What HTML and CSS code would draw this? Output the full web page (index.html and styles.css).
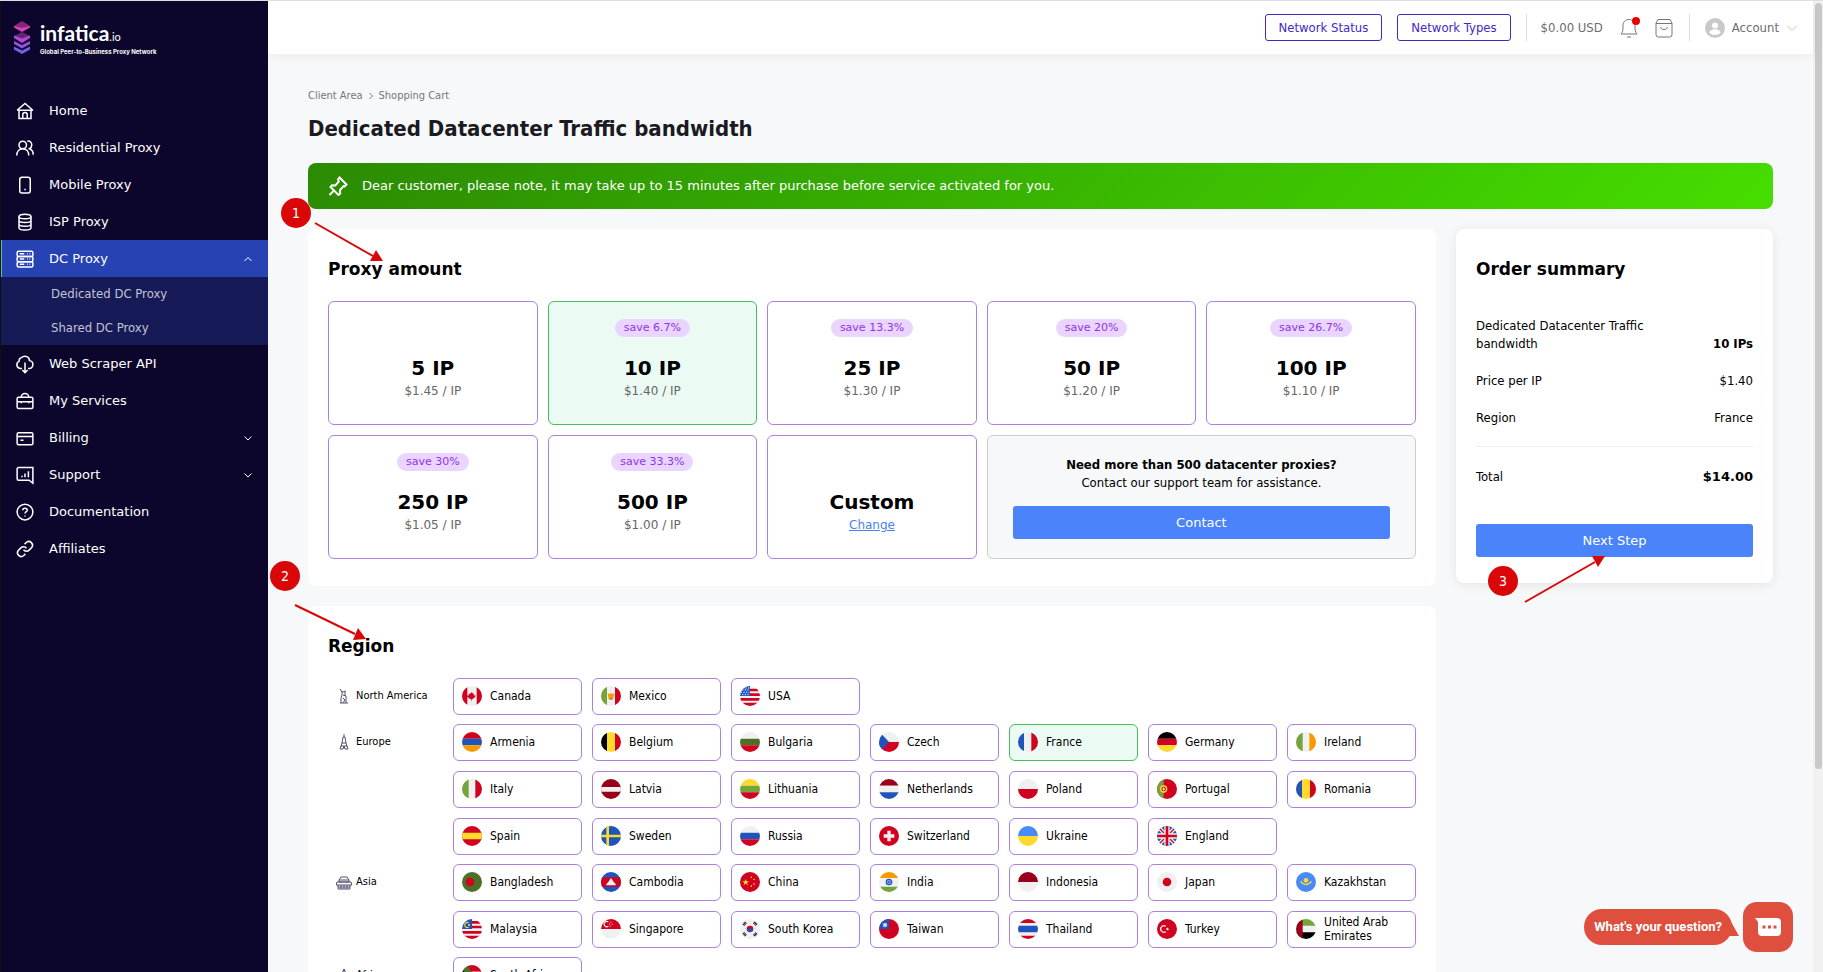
FILE: index.html
```html
<!DOCTYPE html>
<html lang="en">
<head>
    <meta charset="UTF-8">
    <meta name="viewport" content="width=device-width, initial-scale=1.0">
    <title>Shopping Cart - Infatica</title>
    <link rel="stylesheet" href="styles.css">
</head>
<body>
    <!-- Flag sprite -->
    <svg class="sprite" aria-hidden="true">
        <symbol id="canada" viewBox="0 0 30 30"><path fill="#f0f0f0" d="M0 0h30v30H0z"/><path fill="#d0021f" d="M0 0h8v30H0zM22 0h8v30h-8zM15 9l1.5 3 1.5-.6-.3 2.8 2.8-.2-1 1.6.8.8-3.6 2.1.2 1.2-2.4-.3V22h-1v-2.6l-2.400.3.2-1.200-3.600-2.100.8-.8-1-1.600 2.800.2-.3-2.800 1.500.6z"/></symbol>
        <symbol id="mexico" viewBox="0 0 30 30"><path fill="#f0f0f0" d="M0 0h30v30H0z"/><path fill="#73a53c" d="M0 0h9v30H0z"/><path fill="#d0021f" d="M21 0h9v30h-9z"/><path fill="#ff9811" d="M10 11l3 1 2-2 2 2 3-1-1 6a4 4 0 0 1-8 0z"/><path fill="#73a53c" d="M12 18h6l-3 3z"/></symbol>
        <symbol id="usa" viewBox="0 0 30 30"><path fill="#f0f0f0" d="M0 0h30v30H0z"/><path fill="#d0021f" d="M14 4h16v4H14zM14 11h16v4H14zM0 18h30v4H0zM0 25h30v5H0z"/><path fill="#1e54bb" d="M0 0h15v15H0z"/><path stroke="#f0f0f0" stroke-width="1.500" stroke-dasharray="2 2" d="M3 6h12M1 9.500h13M3 13h12M8 3h7"/></symbol>
        <symbol id="armenia" viewBox="0 0 30 30"><path fill="#d0021f" d="M0 0h30v10H0z"/><path fill="#1e54bb" d="M0 10h30v10H0z"/><path fill="#f79a00" d="M0 20h30v10H0z"/></symbol>
        <symbol id="belgium" viewBox="0 0 30 30"><path d="M0 0h9v30H0z"/><path fill="#ffda2c" d="M9 0h12v30H9z"/><path fill="#d0021f" d="M21 0h9v30h-9z"/></symbol>
        <symbol id="bulgaria" viewBox="0 0 30 30"><path fill="#f0f0f0" d="M0 0h30v10H0z"/><path fill="#4d7029" d="M0 10h30v10H0z"/><path fill="#d0021f" d="M0 20h30v10H0z"/></symbol>
        <symbol id="czech" viewBox="0 0 30 30"><path fill="#f0f0f0" d="M0 0h30v15H0z"/><path fill="#d0021f" d="M0 15h30v15H0z"/><path fill="#1e54bb" d="M0 0h1l14 15L1 30H0z"/></symbol>
        <symbol id="france" viewBox="0 0 30 30"><path fill="#f0f0f0" d="M0 0h30v30H0z"/><path fill="#1e54bb" d="M0 0h9v30H0z"/><path fill="#d0021f" d="M20 0h10v30H20z"/></symbol>
        <symbol id="germany" viewBox="0 0 30 30"><path d="M0 0h30v10H0z"/><path fill="#d0021f" d="M0 10h30v10H0z"/><path fill="#ffda2c" d="M0 20h30v10H0z"/></symbol>
        <symbol id="ireland" viewBox="0 0 30 30"><path fill="#f0f0f0" d="M0 0h30v30H0z"/><path fill="#73a53c" d="M0 0h10v30H0z"/><path fill="#f79a00" d="M20 0h10v30H20z"/></symbol>
        <symbol id="italy" viewBox="0 0 30 30"><path fill="#f0f0f0" d="M0 0h30v30H0z"/><path fill="#73a53c" d="M0 0h10v30H0z"/><path fill="#d0021f" d="M20 0h10v30H20z"/></symbol>
        <symbol id="latvia" viewBox="0 0 30 30"><path fill="#970018" d="M0 0h30v30H0z"/><path fill="#f0f0f0" d="M0 12h30v7H0z"/></symbol>
        <symbol id="lithuania" viewBox="0 0 30 30"><path fill="#ffda2c" d="M0 0h30v10H0z"/><path fill="#73a53c" d="M0 10h30v10H0z"/><path fill="#d0021f" d="M0 20h30v10H0z"/></symbol>
        <symbol id="netherlands" viewBox="0 0 30 30"><path fill="#970018" d="M0 0h30v10H0z"/><path fill="#f0f0f0" d="M0 10h30v10H0z"/><path fill="#1e54bb" d="M0 20h30v10H0z"/></symbol>
        <symbol id="poland" viewBox="0 0 30 30"><path fill="#f0f0f0" d="M0 0h30v15H0z"/><path fill="#d0021f" d="M0 15h30v15H0z"/></symbol>
        <symbol id="portugal" viewBox="0 0 30 30"><path fill="#d0021f" d="M0 0h30v30H0z"/><path fill="#73a53c" d="M0 0h10v30H0z"/><circle cx="10" cy="15" r="4.500" fill="#d0021f" stroke="#ffda2c" stroke-width="2"/><path fill="#f0f0f0" d="M8.500 13h3v3l-1.500 1.500L8.500 16z"/></symbol>
        <symbol id="romania" viewBox="0 0 30 30"><path fill="#ffda2c" d="M0 0h30v30H0z"/><path fill="#1e54bb" d="M0 0h9v30H0z"/><path fill="#d0021f" d="M21 0h9v30h-9z"/></symbol>
        <symbol id="spain" viewBox="0 0 30 30"><path fill="#d0021f" d="M0 0h30v30H0z"/><path fill="#ffda2c" d="M0 10h30v10H0z"/></symbol>
        <symbol id="sweden" viewBox="0 0 30 30"><path fill="#1e54bb" d="M0 0h30v30H0z"/><path fill="#ffda2c" d="M8 0h4v30H8zM0 13h30v4H0z"/></symbol>
        <symbol id="russia" viewBox="0 0 30 30"><path fill="#f0f0f0" d="M0 0h30v10H0z"/><path fill="#1e54bb" d="M0 10h30v10H0z"/><path fill="#d0021f" d="M0 20h30v10H0z"/></symbol>
        <symbol id="switzerland" viewBox="0 0 30 30"><path fill="#d0021f" d="M0 0h30v30H0z"/><path fill="#f0f0f0" d="M12.500 7h5v5.500H23v5h-5.500V23h-5v-5.500H7v-5h5.500z"/></symbol>
        <symbol id="ukraine" viewBox="0 0 30 30"><path fill="#478af8" d="M0 0h30v15H0z"/><path fill="#ffda2c" d="M0 15h30v15H0z"/></symbol>
        <symbol id="england" viewBox="0 0 30 30"><path fill="#1e54bb" d="M0 0h30v30H0z"/><path stroke="#f0f0f0" stroke-width="6" d="M0 0l30 30M30 0L0 30"/><path stroke="#d0021f" stroke-width="2" d="M0 0l30 30M30 0L0 30"/><path stroke="#f0f0f0" stroke-width="8" d="M15 0v30M0 15h30"/><path stroke="#d0021f" stroke-width="4" d="M15 0v30M0 15h30"/></symbol>
        <symbol id="bangladesh" viewBox="0 0 30 30"><path fill="#4d7029" d="M0 0h30v30H0z"/><circle cx="12" cy="15" r="6.500" fill="#d0021f"/></symbol>
        <symbol id="cambodia" viewBox="0 0 30 30"><path fill="#1e54bb" d="M0 0h30v30H0z"/><path fill="#d0021f" d="M0 8h30v14H0z"/><path fill="#f0f0f0" d="M8 20v-2l3-3 2-3 2-3 2 3 2 3 3 3v2z"/></symbol>
        <symbol id="china" viewBox="0 0 30 30"><path fill="#d0021f" d="M0 0h30v30H0z"/><path fill="#ffda2c" d="M8.500 10l1.300 3.700h3.900l-3.200 2.300 1.300 3.700-3.300-2.300-3.200 2.300 1.200-3.700-3.200-2.300h4zM16 7h2v2h-2zM20 10h2v2h-2zM20 17h2v2h-2zM16 20h2v2h-2z"/></symbol>
        <symbol id="india" viewBox="0 0 30 30"><path fill="#f0f0f0" d="M0 0h30v30H0z"/><path fill="#f79a00" d="M0 0h30v9H0z"/><path fill="#73a53c" d="M0 22h30v8H0z"/><circle cx="15" cy="15" r="4" fill="#9bb6e4" stroke="#1e54bb" stroke-width="2"/><circle cx="15" cy="15" r="1.500" fill="#1e54bb"/></symbol>
        <symbol id="indonesia" viewBox="0 0 30 30"><path fill="#970018" d="M0 0h30v15H0z"/><path fill="#f0f0f0" d="M0 15h30v15H0z"/></symbol>
        <symbol id="japan" viewBox="0 0 30 30"><path fill="#f0f0f0" d="M0 0h30v30H0z"/><circle cx="15" cy="15" r="6.500" fill="#d0021f"/></symbol>
        <symbol id="kazakhstan" viewBox="0 0 30 30"><path fill="#478af8" d="M0 0h30v30H0z"/><circle cx="15" cy="12.500" r="3.500" fill="#ffda2c"/><path fill="none" stroke="#ffda2c" stroke-width="2" d="M7 14c2 4 4 3 8 5 4-2 6-1 8-5"/></symbol>
        <symbol id="malaysia" viewBox="0 0 30 30"><path fill="#f0f0f0" d="M0 0h30v30H0z"/><path fill="#d0021f" d="M14 3h16v4H14zM14 10h16v4H14zM0 18h30v4H0zM0 25h30v5H0z"/><path fill="#1e54bb" d="M0 0h15v15H0z"/><path fill="none" stroke="#ffda2c" stroke-width="1.700" d="M10 5.500a4 4 0 1 0 0 7"/><circle cx="10.500" cy="9" r="1.600" fill="#ffda2c"/></symbol>
        <symbol id="singapore" viewBox="0 0 30 30"><path fill="#d0021f" d="M0 0h30v15H0z"/><path fill="#f0f0f0" d="M0 15h30v15H0z"/><path fill="none" stroke="#f0f0f0" stroke-width="1.700" d="M11 4.500a4 4 0 1 0 0 6.500"/><path fill="#f0f0f0" d="M14 4h1.500v1.500H14zM12 7h1.500v1.500H12zM16 7h1.500v1.500H16zM13 10h1.500v1.500H13z"/></symbol>
        <symbol id="korea" viewBox="0 0 30 30"><path fill="#f0f0f0" d="M0 0h30v30H0z"/><path fill="#d0021f" d="M10 15a5 5 0 0 1 10 0z"/><path fill="#1e54bb" d="M10 15a5 5 0 0 0 10 0z"/><path stroke="#000" stroke-width="4" stroke-dasharray="1.300 .7" d="M5 9l4-4M21 5l4 4M5 21l4 4M21 25l4-4"/></symbol>
        <symbol id="taiwan" viewBox="0 0 30 30"><path fill="#d0021f" d="M0 0h30v30H0z"/><path fill="#1e54bb" d="M0 0h15v15H0z"/><circle cx="9" cy="9" r="2.500" fill="#f0f0f0" stroke="#a9bfe6" stroke-width="2"/></symbol>
        <symbol id="thailand" viewBox="0 0 30 30"><path fill="#f0f0f0" d="M0 0h30v30H0z"/><path fill="#d0021f" d="M0 0h30v6H0zM0 25h30v5H0z"/><path fill="#1e54bb" d="M0 10h30v10H0z"/></symbol>
        <symbol id="turkey" viewBox="0 0 30 30"><path fill="#d0021f" d="M0 0h30v30H0z"/><path fill="none" stroke="#f0f0f0" stroke-width="2" d="M13 11a4.800 4.800 0 1 0 0 8"/><path fill="#f0f0f0" d="M13.500 13.500l2 .5 1-1.500.5 2 1.500.7-1.700.8-.3 1.700-1.200-1.500-2 .3 1.200-1.500z"/></symbol>
        <symbol id="uae" viewBox="0 0 30 30"><path fill="#f0f0f0" d="M0 0h30v30H0z"/><path fill="#73a53c" d="M0 0h30v10H0z"/><path d="M0 20h30v10H0z"/><path fill="#970018" d="M0 0h10v30H0z"/></symbol>
        <symbol id="south-africa" viewBox="0 0 30 30"><path fill="#d0021f" d="M0 0h30v10H0z"/><path fill="#f0f0f0" d="M0 10h30v10H0z"/><path fill="#1e54bb" d="M0 20h30v10H0z"/><path fill="#4d7029" d="M0 0h7l10 13h13v4H17L7 30H0z"/><path d="M0 6l7 9-7 9z"/></symbol>
    </svg>

    <div class="app">
        <aside class="sidebar">
            <a href="#" class="logo">
                <svg class="logo-mark" viewBox="0 0 16 33" aria-hidden="true">
                    <path fill="#8a2670" d="M8 0l8 5-8 5-8-5z"/>
                    <path fill="#dc3fc0" d="M0 5l8 2 8-2v1.500L8 11 0 6.500z"/>
                    <path fill="#5d2870" d="M8 11l8 4-8 5-8-5z"/>
                    <path fill="#b548d6" d="M0 14.500l8 3 8-3V17l-8 5-8-5z"/>
                    <path fill="#9152dc" d="M0 20l8 4 8-4v3l-8 4.500L0 23z"/>
                    <path fill="#7a5fe6" d="M0 25.500l8 4 8-4v3L8 33l-8-4.500z"/>
                </svg>
                <span class="logo-text">
                    <span class="logo-name">infatica<small>.io</small></span>
                    <span class="logo-tagline">Global Peer-to-Business Proxy Network</span>
                </span>
            </a>
            <nav class="menu">
                <a href="#" class="menu-item"><svg class="icon" viewBox="0 0 24 24"><path d="M1.500 11L12 2l10.500 9M1.500 11h21M4 11v11h16V11M9 22v-5a3 3 0 0 1 6 0v5"/></svg>Home</a>
                <a href="#" class="menu-item"><svg class="icon" viewBox="0 0 24 24"><circle cx="9" cy="8" r="5"/><path d="M1 22c0-5 3-9 8-9s8 4 8 9M15 3c4-1 6 2 6 5 0 2-1 4-3 5 3 1 5 4 5 8"/></svg>Residential Proxy</a>
                <a href="#" class="menu-item"><svg class="icon" viewBox="0 0 24 24"><rect x="5" y="1.500" width="14" height="21" rx="3"/><path d="M11 18h2"/></svg>Mobile Proxy</a>
                <a href="#" class="menu-item"><svg class="icon" viewBox="0 0 24 24"><ellipse cx="12" cy="4.500" rx="8" ry="3"/><path d="M4 4.500v15c0 4 16 4 16 0v-15M4 9.500c0 4 16 4 16 0M4 14.500c0 4 16 4 16 0M7.500 12h1M7.500 17h1"/></svg>ISP Proxy</a>
                <a href="#" class="menu-item active"><svg class="icon" viewBox="0 0 24 24"><rect x="1.500" y="1.500" width="21" height="7" rx="2"/><rect x="1.500" y="8.500" width="21" height="7" rx="2"/><rect x="1.500" y="15.500" width="21" height="7" rx="2"/><path d="M5 5h6M15 5h1M18 5h1M5 12h6M15 12h1M18 12h1M5 19h6M15 19h1M18 19h1"/></svg>DC Proxy<svg class="chevron" viewBox="0 0 10 10"><path d="M1.500 7L5 3.500 8.500 7"/></svg></a>
                <div class="submenu">
                    <a href="#">Dedicated DC Proxy</a>
                    <a href="#">Shared DC Proxy</a>
                </div>
                <a href="#" class="menu-item"><svg class="icon" viewBox="0 0 24 24"><path d="M8 18H6a5 5 0 0 1-2-9.500 5 5 0 0 1 3-5c5-4 11-1 11 4 6 1 6 9 0 10.500h-2M12 10v13M8.500 20l3.500 3.500 3.500-3.500"/></svg>Web Scraper API</a>
                <a href="#" class="menu-item"><svg class="icon" viewBox="0 0 24 24"><rect x="1.500" y="7" width="21" height="15" rx="2"/><path d="M7 7a5 5 0 0 1 10 0M1.500 13h21M7 12v3M17 12v3"/></svg>My Services</a>
                <a href="#" class="menu-item"><svg class="icon" viewBox="0 0 24 24"><rect x="1.500" y="5" width="21" height="16" rx="2"/><path d="M1.500 10h21M6 15h4"/></svg>Billing<svg class="chevron" viewBox="0 0 10 10"><path d="M1.500 3.500L5 7l3.500-3.500"/></svg></a>
                <a href="#" class="menu-item"><svg class="icon" viewBox="0 0 24 24"><path d="M22.500 23l-5-4H3.500a2 2 0 0 1-2-2V4a2 2 0 0 1 2-2h19zM8 15v-2M12 15v-5M16.500 15V7"/></svg>Support<svg class="chevron" viewBox="0 0 10 10"><path d="M1.500 3.500L5 7l3.500-3.500"/></svg></a>
                <a href="#" class="menu-item"><svg class="icon" viewBox="0 0 24 24"><circle cx="12" cy="12" r="10.500"/><path d="M9 9.500C9 6 15 6 15 9.500c0 2-3 2-3 4.500M12 16.500v1.500"/></svg>Documentation</a>
                <a href="#" class="menu-item"><svg class="icon" viewBox="0 0 24 24"><path d="M10 13a5 5 0 0 0 7.500.5l3.500-3.500a5 5 0 0 0-7-7l-2.500 2.500M14 11a5 5 0 0 0-7.500-.5L3 14a5 5 0 0 0 7 7l2.500-2.500"/></svg>Affiliates</a>
            </nav>
        </aside>

        <div class="page">
            <header class="topbar">
                <button type="button" class="btn-outline">Network Status</button>
                <button type="button" class="btn-outline">Network Types</button>
                <div class="topbar-group">
                    <span>$0.00 USD</span>
                    <a href="#" class="bell" aria-label="Notifications"><svg viewBox="0 0 18 20"><path d="M1 16c2-2 2-4 2-8 0-4 2-6.500 6-6.500s6 2.500 6 6.500c0 4 0 6 2 8zM7 19h4"/></svg><span class="dot"></span></a>
                    <a href="#" class="cart" aria-label="Cart"><svg viewBox="0 0 18 20"><path d="M1 5l2-3.500h12L17 5v11.500a2.500 2.500 0 0 1-2.500 2.500h-11A2.500 2.500 0 0 1 1 16.500zM1 5.500h16M5.500 9c1 3.500 6 3.500 7 0"/></svg></a>
                </div>
                <a href="#" class="topbar-group account">
                    <svg class="avatar" viewBox="0 0 20 20"><circle cx="10" cy="10" r="10" fill="#c9c9c9"/><circle cx="10" cy="7.500" r="3" fill="#fff"/><path fill="#fff" d="M4.500 15c0-5 11-5 11 0-3 2.500-8 2.500-11 0z"/></svg>
                    <span>Account</span>
                    <svg class="caret" viewBox="0 0 12 12"><path d="M1.500 4L6 8.500 10.500 4"/></svg>
                </a>
            </header>

            <main class="content">
                <nav class="breadcrumb">
                    <a href="#">Client Area</a>
                    <svg viewBox="0 0 6 8"><path d="M1.500 1l3 3-3 3"/></svg>
                    <a href="#">Shopping Cart</a>
                </nav>
                <h1>Dedicated Datacenter Traffic bandwidth</h1>

                <div class="notice">
                    <svg viewBox="0 0 20 20"><path d="M11.500 1.500l7 7-2 2-1-.3-3.500 4 .2 3.300-1.700 1.500-8-8L4 9.300l3.300.2 3.500-4-.8-2zM6 14.500L1.500 19"/></svg>
                    Dear customer, please note, it may take up to 15 minutes after purchase before service activated for you.
                </div>

                <div class="layout">
                    <div class="steps">
                        <section class="card">
                            <h2>Proxy amount</h2>
                            <div class="plans">
                                <button type="button" class="plan"><span class="plan-top"></span><strong>5 IP</strong><span class="price">$1.45 / IP</span></button>
                                <button type="button" class="plan selected"><span class="plan-top"><span class="save">save 6.7%</span></span><strong>10 IP</strong><span class="price">$1.40 / IP</span></button>
                                <button type="button" class="plan"><span class="plan-top"><span class="save">save 13.3%</span></span><strong>25 IP</strong><span class="price">$1.30 / IP</span></button>
                                <button type="button" class="plan"><span class="plan-top"><span class="save">save 20%</span></span><strong>50 IP</strong><span class="price">$1.20 / IP</span></button>
                                <button type="button" class="plan"><span class="plan-top"><span class="save">save 26.7%</span></span><strong>100 IP</strong><span class="price">$1.10 / IP</span></button>
                                <button type="button" class="plan"><span class="plan-top"><span class="save">save 30%</span></span><strong>250 IP</strong><span class="price">$1.05 / IP</span></button>
                                <button type="button" class="plan"><span class="plan-top"><span class="save">save 33.3%</span></span><strong>500 IP</strong><span class="price">$1.00 / IP</span></button>
                                <div class="plan"><span class="plan-top"></span><strong>Custom</strong><a href="#">Change</a></div>
                                <div class="plan-contact">
                                    <strong>Need more than 500 datacenter proxies?</strong>
                                    <p>Contact our support team for assistance.</p>
                                    <button type="button" class="btn-primary">Contact</button>
                                </div>
                            </div>
                            <svg class="marker marker-amount" viewBox="0 0 102 64">
                                <circle cx="15" cy="15" r="15"/>
                                <text x="15" y="20">1</text>
                                <path class="line" d="M34 25l58 33"/>
                                <path d="M102 63l-13 0 6-11z"/>
                            </svg>
                        </section>

                        <section class="card">
                            <h2>Region</h2>
                            <div class="region">
                                <div class="region-name"><svg viewBox="0 0 16 16"><path d="M5 3l2 1 3-1M4 1l2 3v3l-1 3v5M7 7l3 1v7M4 15h8M7 10l2 2-2 3M9 4v4"/></svg>North America</div>
                                <div class="countries">
                                    <button type="button" class="country"><svg class="flag"><use href="#canada"/></svg>Canada</button>
                                    <button type="button" class="country"><svg class="flag"><use href="#mexico"/></svg>Mexico</button>
                                    <button type="button" class="country"><svg class="flag"><use href="#usa"/></svg>USA</button>
                                </div>
                            </div>
                            <div class="region">
                                <div class="region-name"><svg viewBox="0 0 16 16"><path d="M8 0v3M7 3L6 9l-2 6h3l1-3 1 3h3l-2-6-1-6zM6 9h4M5 12h6"/></svg>Europe</div>
                                <div class="countries">
                                    <button type="button" class="country"><svg class="flag"><use href="#armenia"/></svg>Armenia</button>
                                    <button type="button" class="country"><svg class="flag"><use href="#belgium"/></svg>Belgium</button>
                                    <button type="button" class="country"><svg class="flag"><use href="#bulgaria"/></svg>Bulgaria</button>
                                    <button type="button" class="country"><svg class="flag"><use href="#czech"/></svg>Czech</button>
                                    <button type="button" class="country selected"><svg class="flag"><use href="#france"/></svg>France</button>
                                    <button type="button" class="country"><svg class="flag"><use href="#germany"/></svg>Germany</button>
                                    <button type="button" class="country"><svg class="flag"><use href="#ireland"/></svg>Ireland</button>
                                    <button type="button" class="country"><svg class="flag"><use href="#italy"/></svg>Italy</button>
                                    <button type="button" class="country"><svg class="flag"><use href="#latvia"/></svg>Latvia</button>
                                    <button type="button" class="country"><svg class="flag"><use href="#lithuania"/></svg>Lithuania</button>
                                    <button type="button" class="country"><svg class="flag"><use href="#netherlands"/></svg>Netherlands</button>
                                    <button type="button" class="country"><svg class="flag"><use href="#poland"/></svg>Poland</button>
                                    <button type="button" class="country"><svg class="flag"><use href="#portugal"/></svg>Portugal</button>
                                    <button type="button" class="country"><svg class="flag"><use href="#romania"/></svg>Romania</button>
                                    <button type="button" class="country"><svg class="flag"><use href="#spain"/></svg>Spain</button>
                                    <button type="button" class="country"><svg class="flag"><use href="#sweden"/></svg>Sweden</button>
                                    <button type="button" class="country"><svg class="flag"><use href="#russia"/></svg>Russia</button>
                                    <button type="button" class="country"><svg class="flag"><use href="#switzerland"/></svg>Switzerland</button>
                                    <button type="button" class="country"><svg class="flag"><use href="#ukraine"/></svg>Ukraine</button>
                                    <button type="button" class="country"><svg class="flag"><use href="#england"/></svg>England</button>
                                </div>
                            </div>
                            <div class="region">
                                <div class="region-name"><svg viewBox="0 0 16 16"><path d="M5 3h6l2 3H3zM3 6v2h10V6M1 8h14l1 3H0zM2 11v4h12v-4M5 11v4M8 11v4M11 11v4M2 13h12"/></svg>Asia</div>
                                <div class="countries">
                                    <button type="button" class="country"><svg class="flag"><use href="#bangladesh"/></svg>Bangladesh</button>
                                    <button type="button" class="country"><svg class="flag"><use href="#cambodia"/></svg>Cambodia</button>
                                    <button type="button" class="country"><svg class="flag"><use href="#china"/></svg>China</button>
                                    <button type="button" class="country"><svg class="flag"><use href="#india"/></svg>India</button>
                                    <button type="button" class="country"><svg class="flag"><use href="#indonesia"/></svg>Indonesia</button>
                                    <button type="button" class="country"><svg class="flag"><use href="#japan"/></svg>Japan</button>
                                    <button type="button" class="country"><svg class="flag"><use href="#kazakhstan"/></svg>Kazakhstan</button>
                                    <button type="button" class="country"><svg class="flag"><use href="#malaysia"/></svg>Malaysia</button>
                                    <button type="button" class="country"><svg class="flag"><use href="#singapore"/></svg>Singapore</button>
                                    <button type="button" class="country"><svg class="flag"><use href="#korea"/></svg>South Korea</button>
                                    <button type="button" class="country"><svg class="flag"><use href="#taiwan"/></svg>Taiwan</button>
                                    <button type="button" class="country"><svg class="flag"><use href="#thailand"/></svg>Thailand</button>
                                    <button type="button" class="country"><svg class="flag"><use href="#turkey"/></svg>Turkey</button>
                                    <button type="button" class="country"><svg class="flag"><use href="#uae"/></svg>United Arab Emirates</button>
                                </div>
                            </div>
                            <div class="region">
                                <div class="region-name"><svg viewBox="0 0 16 16"><path d="M8 2l6 12H2zM8 2v12"/></svg>Africa</div>
                                <div class="countries">
                                    <button type="button" class="country"><svg class="flag"><use href="#south-africa"/></svg>South Africa</button>
                                </div>
                            </div>
                            <svg class="marker marker-region" viewBox="0 0 96 79">
                                <circle cx="15" cy="15" r="15"/>
                                <text x="15" y="20">2</text>
                                <path class="line" d="M25 44l60 29"/>
                                <path d="M96 78l-13 1 5-12z"/>
                            </svg>
                        </section>
                    </div>

                    <aside class="card summary">
                        <h2>Order summary</h2>
                        <dl>
                            <div class="row"><dt>Dedicated Datacenter Traffic bandwidth</dt><dd><strong>10 IPs</strong></dd></div>
                            <div class="row"><dt>Price per IP</dt><dd>$1.40</dd></div>
                            <div class="row"><dt>Region</dt><dd>France</dd></div>
                            <div class="row total"><dt>Total</dt><dd><strong>$14.00</strong></dd></div>
                        </dl>
                        <button type="button" class="btn-primary">Next Step</button>
                        <svg class="marker marker-next" viewBox="0 0 117 47">
                            <circle cx="15" cy="25" r="15"/>
                            <text x="15" y="30">3</text>
                            <path class="line" d="M37 46l70-40"/>
                            <path d="M117 0l-13 0 6 11z"/>
                        </svg>
                    </aside>
                </div>
            </main>
        </div>
        <div class="scrollbar"><div class="thumb"></div></div>
    </div>

    <div class="chat">
        <span class="chat-label">What's your question?</span>
        <button type="button" class="chat-button" aria-label="Open chat">
            <svg viewBox="0 0 28 20"><path fill="#fff" d="M1 1h22a4 4 0 0 1 4 4v10a4 4 0 0 1-4 4H8a4 4 0 0 1-4-4V5z"/><path fill="#de4f3e" d="M8.500 8.500h3v3h-3zM14 8.500h3v3h-3zM19.500 8.500h3v3h-3z"/></svg>
        </button>
    </div>
</body>
</html>
```

FILE: styles.css
```css
* {
    box-sizing: border-box;
}
body {
    margin: 0;
    font-family: "DejaVu Sans Condensed", Tahoma, sans-serif;
    font-size: 13px;
    line-height: 18px;
    color: #000;
    background: #f6f8fa;
}
a {
    color: inherit;
    text-decoration: none;
}
button {
    font-family: inherit;
    font-size: inherit;
    line-height: inherit;
    color: inherit;
    cursor: pointer;
}
svg {
    display: block;
    flex-shrink: 0;
}
h1, h2, p, dl, dd {
    margin: 0;
}
.sprite {
    position: absolute;
    width: 0;
    height: 0;
}
.app {
    display: flex;
    height: 100vh;
    overflow: hidden;
    border-top: 1px solid #dcdfdf;
}

/* Sidebar */
.sidebar {
    width: 268px;
    flex-shrink: 0;
    background: #0c062c;
    border-left: 1px solid #111;
    color: #fff;
}
.logo {
    display: flex;
    gap: 10px;
    height: 91px;
    padding: 20px 13px;
}
.logo-mark {
    width: 16px;
    height: 33px;
}
.logo-text {
    display: flex;
    flex-direction: column;
}
.logo-name {
    font-family: Lato, sans-serif;
    font-size: 21px;
    font-weight: bold;
    line-height: 24px;
}
.logo-name small {
    font-size: 11px;
    font-weight: normal;
}
.logo-tagline {
    font-family: Inter, sans-serif;
    font-size: 6px;
    font-weight: bold;
    line-height: 6px;
    white-space: nowrap;
}
.menu-item {
    display: flex;
    align-items: center;
    height: 37px;
    padding: 0 15px;
    font-family: "DejaVu Sans", Verdana, sans-serif;
}
.menu-item.active {
    background: #2742b3;
    box-shadow: inset 1px 0 #4fc3a1;
}
.icon {
    width: 18px;
    height: 18px;
    margin-right: 15px;
    fill: none;
    stroke: #fff;
    stroke-width: 2;
    overflow: visible;
}
.chevron {
    width: 10px;
    height: 10px;
    margin-left: auto;
    fill: none;
    stroke: #fff;
}
.submenu {
    background: #161a56;
    color: #c3c4d4;
}
.submenu a {
    display: block;
    padding: 0 50px;
    line-height: 34px;
}

/* Top bar */
.page {
    flex: 1;
    min-width: 0;
}
.topbar {
    position: relative;
    display: flex;
    align-items: center;
    justify-content: flex-end;
    height: 53px;
    padding-right: 15px;
    background: #fff;
    box-shadow: 0 2px 12px rgba(0, 0, 0, 0.06);
    color: #6c6c70;
}
.btn-outline {
    height: 27px;
    margin-right: 15px;
    padding: 0 13px;
    background: #fff;
    border: 1px solid #4527c4;
    border-radius: 3px;
    color: #4527c4;
}
.topbar-group {
    display: flex;
    align-items: center;
    height: 27px;
    padding: 0 16px 0 14px;
    border-left: 1px solid #ddd;
}
.topbar-group.account {
    gap: 7px;
    padding: 0 0 0 15px;
}
.bell, .cart {
    position: relative;
    margin-left: 17px;
}
.bell svg, .cart svg {
    width: 18px;
    height: 20px;
    fill: none;
    stroke: #77777a;
}
.dot {
    position: absolute;
    top: -1px;
    right: -2px;
    width: 8px;
    height: 8px;
    border-radius: 50%;
    background: #e60000;
}
.avatar {
    width: 20px;
    height: 20px;
}
.caret {
    width: 12px;
    height: 12px;
    fill: none;
    stroke: #c4c4c4;
}

/* Content */
.content {
    padding: 33px 40px;
}
.breadcrumb {
    display: flex;
    align-items: center;
    gap: 5px;
    font-size: 11px;
    color: #777;
}
.breadcrumb svg {
    width: 6px;
    height: 8px;
    fill: none;
    stroke: #777;
}
h1 {
    margin-top: 9px;
    font-size: 22px;
    line-height: 30px;
    color: #1b1a22;
}
.notice {
    display: flex;
    align-items: center;
    gap: 14px;
    height: 46px;
    margin: 19px 0 20px;
    padding: 0 20px;
    border-radius: 8px;
    background: linear-gradient(135deg, #2b8a02, #46de00);
    color: #fff;
    font-family: "DejaVu Sans", Verdana, sans-serif;
}
.notice svg {
    width: 20px;
    height: 20px;
    fill: none;
    stroke: #fff;
    stroke-width: 2;
}
.layout {
    display: grid;
    grid-template-columns: 1fr 317px;
    align-items: start;
    gap: 20px;
}
.steps {
    display: grid;
    gap: 20px;
}
.card {
    position: relative;
    padding: 28px 20px 27px;
    border-radius: 8px;
    background: #fff;
}
h2 {
    margin-bottom: 20px;
    font-family: "DejaVu Sans", Verdana, sans-serif;
    font-size: 17px;
    line-height: 24px;
}

/* Plans */
.plans {
    display: grid;
    grid-template-columns: repeat(5, 1fr);
    gap: 10px;
}
.plan {
    display: flex;
    flex-direction: column;
    align-items: center;
    height: 124px;
    padding: 17px 10px 0;
    background: #fff;
    border: 1px solid #ad80de;
    border-radius: 6px;
    font-family: "DejaVu Sans", Verdana, sans-serif;
}
.plan.selected, .country.selected {
    background: #ebfbf4;
    border-color: #43c059;
}
.plan-top {
    height: 36px;
}
.save {
    display: block;
    padding: 0 9px;
    border-radius: 9px;
    background: #e9d5ff;
    color: #8f33ea;
    font-size: 11px;
}
.plan strong {
    font-size: 20px;
    line-height: 26px;
}
.price {
    color: #666;
    font-size: 12px;
    line-height: 20px;
}
.plan a {
    color: #4a80f5;
    font-size: 12px;
    line-height: 20px;
    text-decoration: underline;
}
.plan-contact {
    grid-column: span 2;
    padding: 20px 25px 0;
    background: #f6f8fa;
    border: 1px solid #ccc;
    border-radius: 6px;
    text-align: center;
}
.btn-primary {
    width: 100%;
    height: 33px;
    padding: 0;
    background: #4a83fa;
    border: none;
    border-radius: 3px;
    color: #fff;
    font-family: "DejaVu Sans", Verdana, sans-serif;
}
.plan-contact .btn-primary {
    margin-top: 14px;
}

/* Regions */
.region {
    display: grid;
    grid-template-columns: 125px 1fr;
    margin-bottom: 9px;
}
.region-name {
    display: flex;
    align-items: center;
    gap: 4px;
    height: 36px;
    padding-left: 8px;
    font-size: 11px;
}
.region-name svg {
    width: 16px;
    height: 16px;
    fill: none;
    stroke: #55506e;
}
.countries {
    display: grid;
    grid-template-columns: repeat(7, 1fr);
    gap: 10px;
}
.country {
    display: flex;
    align-items: center;
    gap: 8px;
    height: 37px;
    padding: 0 8px 2px;
    background: #fff;
    border: 1px solid #ad80de;
    border-radius: 6px;
    font-size: 12px;
    line-height: 14px;
    text-align: left;
}
.flag {
    width: 20px;
    height: 20px;
    border-radius: 50%;
}

/* Order summary */
.summary {
    padding-bottom: 26px;
    box-shadow: 0 2px 12px rgba(0, 0, 0, 0.08);
}
.summary dl {
    padding-top: 16px;
}
.row {
    display: flex;
    align-items: flex-end;
    justify-content: space-between;
    margin-bottom: 19px;
}
.row dt {
    max-width: 200px;
}
.row.total {
    margin-bottom: 38px;
    padding-top: 21px;
    border-top: 1px solid #eee;
}
.total strong {
    font-family: "DejaVu Sans", Verdana, sans-serif;
}

/* Step markers */
.marker {
    position: absolute;
    fill: #d90708;
}
.marker text {
    fill: #fff;
    font-size: 14px;
    text-anchor: middle;
}
.marker .line {
    fill: none;
    stroke: #d90708;
    stroke-width: 2;
}
.marker-amount {
    top: -31px;
    left: -27px;
    width: 102px;
}
.marker-region {
    top: -45px;
    left: -38px;
    width: 96px;
}
.marker-next {
    left: 32px;
    bottom: -20px;
    width: 117px;
}

/* Scrollbar */
.scrollbar {
    width: 10px;
    flex-shrink: 0;
    padding: 2px 1px 0 2px;
    background: #f1f1f1;
}
.thumb {
    height: 79%;
    border-radius: 4px;
    background: #c9c9c9;
}

/* Chat widget */
.chat {
    position: fixed;
    right: 30px;
    bottom: 20px;
    display: flex;
    align-items: center;
    gap: 11px;
}
.chat-label {
    position: relative;
    padding: 0 10px;
    border-radius: 18px;
    background: #de4f3e;
    color: #fff;
    font-family: Roboto, sans-serif;
    font-weight: bold;
    line-height: 36px;
}
.chat-label::after {
    content: "";
    position: absolute;
    right: -7px;
    bottom: 9px;
    width: 14px;
    height: 20px;
    background: #de4f3e;
    clip-path: polygon(0 100%, 100% 100%, 20% 0);
}
.chat-button {
    display: flex;
    align-items: center;
    justify-content: center;
    width: 50px;
    height: 50px;
    padding: 0;
    border: none;
    border-radius: 14px;
    background: #de4f3e;
}
.chat-button svg {
    width: 28px;
    height: 20px;
}
```
